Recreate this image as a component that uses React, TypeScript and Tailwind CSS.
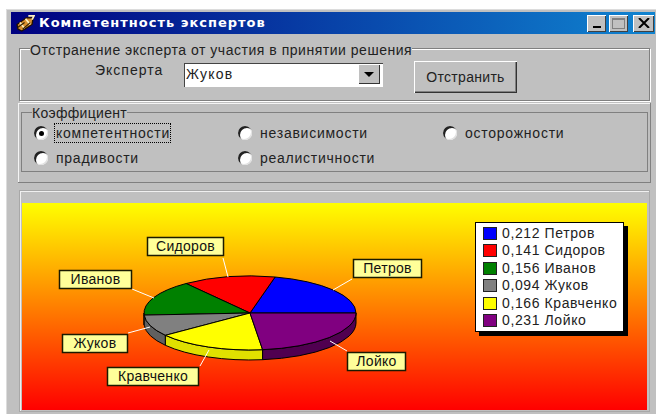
import React from "react";

type Slice = { name: string; value: string; share: number; fill: string; side: string };

const slices: Slice[] = [
  { name: "Петров", value: "0,212", share: 0.212, fill: "#0000ff", side: "#0000a8" },
  { name: "Сидоров", value: "0,141", share: 0.141, fill: "#ff0000", side: "#a80000" },
  { name: "Иванов", value: "0,156", share: 0.156, fill: "#008000", side: "#005000" },
  { name: "Жуков", value: "0,094", share: 0.094, fill: "#808080", side: "#606060" },
  { name: "Кравченко", value: "0,166", share: 0.166, fill: "#ffff00", side: "#e0e000" },
  { name: "Лойко", value: "0,231", share: 0.231, fill: "#800080", side: "#500050" },
];

const CX = 250;
const CY = 313;
const RX = 106;
const RY = 37;
const DEPTH = 10;

const at = (deg: number, dy = 0) => {
  const r = (deg * Math.PI) / 180;
  return `${(CX + RX * Math.cos(r)).toFixed(1)} ${(CY + dy - RY * Math.sin(r)).toFixed(1)}`;
};

function Pie() {
  let angle = 0;
  const parts = slices.map((s) => {
    const from = angle;
    const to = angle + s.share * 360;
    angle = to;
    return { ...s, from, to };
  });
  return (
    <g stroke="#000" strokeWidth="1" strokeLinejoin="round">
      {parts
        .filter((p) => p.to > 180)
        .map((p) => {
          const a = Math.max(p.from, 180);
          const large = p.to - a > 180 ? 1 : 0;
          return (
            <path
              key={p.name + "-side"}
              fill={p.side}
              d={`M${at(a)} A${RX} ${RY} 0 ${large} 0 ${at(p.to)} L${at(p.to, DEPTH)} A${RX} ${RY} 0 ${large} 1 ${at(a, DEPTH)} Z`}
            />
          );
        })}
      {parts.map((p) => (
        <path
          key={p.name}
          fill={p.fill}
          d={`M${CX} ${CY} L${at(p.from)} A${RX} ${RY} 0 ${p.to - p.from > 180 ? 1 : 0} 0 ${at(p.to)} Z`}
        />
      ))}
    </g>
  );
}

const callouts = [
  { name: "Сидоров", x: 147, y: 237, w: 76, line: "223 258 228 277" },
  { name: "Иванов", x: 59, y: 270, w: 72, line: "132 289 154 298" },
  { name: "Жуков", x: 62, y: 334, w: 65, line: "128 333 150 327" },
  { name: "Кравченко", x: 107, y: 367, w: 91, line: "200 366 209 350" },
  { name: "Петров", x: 353, y: 259, w: 68, line: "352 279 333 290" },
  { name: "Лойко", x: 347, y: 352, w: 58, line: "347 351 330 341" },
];

function PieChart() {
  return (
    <svg viewBox="22 203 625 207" className="absolute inset-0 h-full w-full">
      <Pie />
      {callouts.map((c) => {
        const [x1, y1, x2, y2] = c.line.split(" ");
        return (
          <g key={c.name}>
            <line x1={x1} y1={y1} x2={x2} y2={y2} stroke="#fff" strokeWidth="1" />
            <rect x={c.x + 0.5} y={c.y + 0.5} width={c.w} height={18} fill="#ffff99" stroke="#1a1a00" strokeWidth="1.5" />
            <text
              x={c.x + c.w / 2 + 0.5}
              y={c.y + 14}
              textAnchor="middle"
              fontSize="14"
              fill="#111"
              fontFamily="'Liberation Sans', sans-serif"
              letterSpacing="0.3"
            >
              {c.name}
            </text>
          </g>
        );
      })}
    </svg>
  );
}

function Radio({ label, checked, focused }: { label: string; checked?: boolean; focused?: boolean }) {
  return (
    <div className="flex h-[24px] items-center">
      <span className="flex h-[14px] w-[14px] shrink-0 items-center justify-center rounded-full bg-white shadow-[inset_2px_2px_0_#222,inset_-1px_-1px_0_#e0e0e0]">
        {checked && <span className="h-[5px] w-[5px] rounded-full bg-black" />}
      </span>
      {focused ? (
        <span className="ml-[6px] w-[117px] overflow-hidden whitespace-nowrap border border-dotted border-black py-[2px] pl-[1px] leading-[14px]">
          {label}
        </span>
      ) : (
        <span className="ml-[8px] leading-[14px]">{label}</span>
      )}
    </div>
  );
}

function CaptionButton({ children, gap }: { children: React.ReactNode; gap: string }) {
  return (
    <div
      className={`flex h-[17px] items-center justify-center bg-[#c0c0c0] shadow-[inset_1px_1px_0_#fff,inset_-1px_-1px_0_#404040] ${gap}`}
    >
      {children}
    </div>
  );
}

export default function App() {
  return (
    <div className="h-[414px] w-[656px] overflow-hidden bg-white pl-[6px] pt-[9px] font-['Liberation_Sans',sans-serif] text-[14px] text-[#222]">
      <div className="h-[405px] w-[650px] bg-[#c0c0c0] pl-[5px] pt-[3px] shadow-[inset_1px_1px_0_#dcdcdc]">
        {/* Caption */}
        <div className="flex h-[22px] w-[644px] items-center bg-[linear-gradient(to_right,#000080,#1084d0)] pl-[5px] pr-[1px]">
          <svg viewBox="0 0 20 18" className="h-[17px] w-[19px] shrink-0">
            <path d="M1 10 L11 3 L18 3 L17 10 L6 17 L2 15 Z" fill="#d89030" stroke="#201000" strokeWidth="1.4" />
            <path d="M4 8 L9 14 M10 4 L15 10 M13 1 L19 1 L17 5" stroke="#fff0c0" strokeWidth="1.8" fill="none" />
            <path d="M2 13 L9 8 M7 15 L15 8" stroke="#302000" strokeWidth="1.2" fill="none" />
          </svg>
          <span className="ml-[4px] font-['DejaVu_Sans',sans-serif] text-[13px] font-bold tracking-[1px] text-white">
            Компетентность экспертов
          </span>
          <div className="ml-auto flex">
            <CaptionButton gap="mr-[3px] w-[19px]">
              <span className="mt-[8px] h-[2px] w-[8px] bg-black" />
            </CaptionButton>
            <CaptionButton gap="mr-[5px] w-[19px]">
              <span className="h-[11px] w-[13px] border border-[#808080] border-t-2" />
            </CaptionButton>
            <CaptionButton gap="w-[21px]">
              <svg viewBox="0 0 12 10" className="h-[10px] w-[12px]">
                <path d="M1 0 L11 10 M11 0 L1 10" stroke="#000" strokeWidth="2" />
              </svg>
            </CaptionButton>
          </div>
        </div>

        {/* Removal group */}
        <div className="relative ml-[8px] mt-[14px] flex h-[53px] w-[631px] items-start border border-[#808080] shadow-[inset_1px_1px_0_#fff,1px_1px_0_#fff]">
          <span className="absolute left-[10px] top-[-6px] bg-[#c0c0c0] leading-[14px] tracking-[0.52px]">
            Отстранение эксперта от участия в принятии решения
          </span>
          <span className="ml-[75px] mt-[14px] w-[89px] leading-[15px] tracking-[1px]">Эксперта</span>
          <div className="mt-[14px] flex h-[24px] w-[199px] bg-white pl-[2px] pt-[1px] shadow-[inset_1px_1px_0_#444]">
            <span className="flex-1 leading-[21px] tracking-[1.2px]">Жуков</span>
            <div className="mr-[3px] flex h-[20px] w-[22px] items-center justify-center bg-[#c0c0c0] shadow-[inset_1px_1px_0_#fff,inset_-1px_-1px_0_#333]">
              <span className="border-x-[5px] border-t-[5px] border-x-transparent border-t-black" />
            </div>
          </div>
          <button className="ml-[31px] mt-[12px] h-[32px] w-[103px] bg-[#c0c0c0] text-[14px] tracking-[0.3px] shadow-[inset_1px_1px_0_#fff,inset_-1px_-1px_0_#333,inset_-2px_-2px_0_#808080]">
            Отстранить
          </button>
        </div>

        {/* Coefficient panel */}
        <div className="ml-[7px] mt-[2px] h-[80px] w-[633px] border-b border-r border-b-[#808080] border-r-[#808080] px-[3px] pt-[9px] shadow-[inset_1px_1px_0_#f4f4f4]">
          <div className="relative grid h-[60px] w-[627px] grid-cols-[204px_205px_1fr] border border-[#808080] pl-[12px] pt-[8px] tracking-[0.75px]">
            <span className="absolute left-[10px] top-[-7px] bg-[#c0c0c0] leading-[14px] tracking-[0.3px]">Коэффициент</span>
            <Radio label="компетентности" checked focused />
            <Radio label="независимости" />
            <Radio label="осторожности" />
            <Radio label="прадивости" />
            <Radio label="реалистичности" />
          </div>
        </div>

        {/* Chart panel */}
        <div className="ml-[8px] mt-[7px] h-[222px] w-[631px] border border-[#a8a8a8] px-[2px] pt-[12px] shadow-[inset_1px_1px_0_#f0f0f0]">
          <div className="relative h-[207px] w-[625px] bg-[linear-gradient(to_bottom,#ffff00,#ff0000)]">
            <PieChart />
            <div className="absolute left-[453px] top-[19px] flex h-[110px] w-[149px] flex-col gap-[1px] border border-black bg-white py-[2px] pl-[7px] shadow-[4px_4px_0_#000]">
              {slices.map((s) => (
                <div key={s.name} className="flex h-[16.5px] items-center whitespace-nowrap">
                  <span className="h-[13px] w-[14px] shrink-0 border border-[#222]" style={{ background: s.fill }} />
                  <span className="ml-[5px] tracking-[0.6px]">
                    {s.value} {s.name}
                  </span>
                </div>
              ))}
            </div>
          </div>
        </div>
      </div>
    </div>
  );
}
